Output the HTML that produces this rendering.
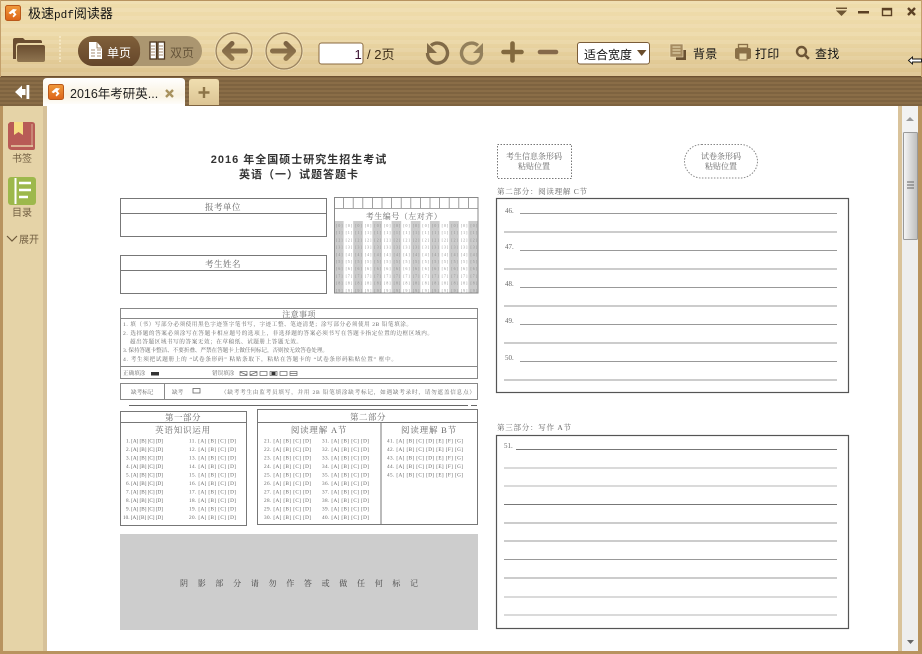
<!DOCTYPE html>
<html lang="zh"><head><meta charset="utf-8"><title>极速pdf阅读器</title>
<style>
html,body{margin:0;padding:0;background:#fff;width:922px;height:654px;overflow:hidden}
svg{display:block;font-family:"Liberation Sans","Noto Sans CJK SC",sans-serif}
.s{font-family:"Liberation Serif","Noto Serif CJK SC",serif;fill:#666}
.doc{filter:blur(.35px)}
</style></head><body>
<svg width="922" height="654" viewBox="0 0 922 654" xmlns="http://www.w3.org/2000/svg">
<defs>
<linearGradient id="tb" x1="0" y1="0" x2="0" y2="1"><stop offset="0" stop-color="#efdcab"/><stop offset=".45" stop-color="#ecd8a6"/><stop offset="1" stop-color="#dcc28c"/></linearGradient>
<pattern id="st" width="4" height="8" patternUnits="userSpaceOnUse"><rect width="4" height="4" fill="#fff" opacity=".09"/></pattern>
<pattern id="st2" width="4" height="4" patternUnits="userSpaceOnUse"><rect width="4" height="4" fill="#8a6d47"/><rect width="4" height="2" fill="#7e6340"/></pattern>
<linearGradient id="fd" x1="0" y1="0" x2="0" y2="1"><stop offset="0" stop-color="#6a4d30"/><stop offset="1" stop-color="#8f7550"/></linearGradient>
<linearGradient id="ac" x1="0" y1="0" x2="0" y2="1"><stop offset="0" stop-color="#80603a"/><stop offset="1" stop-color="#65462a"/></linearGradient>
<linearGradient id="ic" x1="0" y1="0" x2="0" y2="1"><stop offset="0" stop-color="#7c6344"/><stop offset="1" stop-color="#93794f"/></linearGradient>
<linearGradient id="tab" x1="0" y1="0" x2="0" y2="1"><stop offset="0" stop-color="#fff"/><stop offset=".6" stop-color="#f9f2e1"/><stop offset="1" stop-color="#fff"/></linearGradient>
<linearGradient id="pt" x1="0" y1="0" x2="0" y2="1"><stop offset="0" stop-color="#f0deb0"/><stop offset="1" stop-color="#dcc594"/></linearGradient>
<linearGradient id="or" x1="0" y1="0" x2="0" y2="1"><stop offset="0" stop-color="#f09a3c"/><stop offset="1" stop-color="#dd6418"/></linearGradient>
<linearGradient id="th" x1="0" y1="0" x2="1" y2="0"><stop offset="0" stop-color="#f6f6f6"/><stop offset=".5" stop-color="#d9d9d9"/><stop offset="1" stop-color="#bdbdbd"/></linearGradient>
<g id="logo"><rect x=".5" y=".5" width="15" height="15" rx="2" fill="url(#or)" stroke="#b9581a"/><path d="M3.5 8 L8 4 L12 4.5 L9.5 7 L11.5 9.5 L8.5 12.5 L7.5 11 L9 9.5 L7.5 7.8 L5.5 9.2Z" fill="#fff"/></g>
</defs>

<!-- base -->
<rect width="922" height="654" fill="#b8935f"/>
<rect x="0" y="1" width="922" height="76" fill="url(#tb)"/>
<rect x="0" y="1" width="922" height="76" fill="url(#st)"/>
<rect x="0" y="0" width="922" height="1" fill="#b8935f"/>
<rect x="0" y="76" width="922" height="1.5" fill="#6d5030"/>
<rect x="0" y="77" width="922" height="29" fill="url(#st2)"/>
<rect x="0" y="0" width="1" height="77" fill="#c4a06c"/>
<rect x="921" y="0" width="1" height="77" fill="#c4a06c"/>
<rect x="3" y="106" width="40" height="545" fill="#e5d3a7"/>
<rect x="43" y="106" width="4" height="545" fill="#d6c199"/>
<rect x="47" y="106" width="851" height="545" fill="#fff"/>
<rect x="898" y="106" width="4" height="545" fill="#d9c39b"/>
<rect x="902" y="106" width="16" height="545" fill="#eeeeee"/>

<!-- title bar -->
<use href="#logo" x="5" y="5"/>
<text x="28" y="18" font-size="13" fill="#111">极速<tspan font-family="Liberation Mono" font-size="11">pdf</tspan>阅读器</text>
<path d="M836 7.5h11v1.5h-11zM836 10.500h11L841.500 16Z" fill="#6f5634"/>
<rect x="858" y="11" width="11" height="2.500" fill="#5b4024"/>
<rect x="882.500" y="8.500" width="9" height="7" fill="none" stroke="#5b4024" stroke-width="1.400"/><rect x="882" y="8" width="10" height="2.400" fill="#5b4024"/>
<path d="M908 8l7 7M915 8l-7 7" stroke="#5b4024" stroke-width="2.400"/>

<!-- toolbar left -->
<path d="M13 59V40q0-2 2-2h8l2 2h15q2 0 2 2v1H19q-3 0-3 3v13z" fill="#6a4d30"/>
<path d="M17 47q0-2 2-2h24q2 0 2 2v13q0 2-2 2H19q-2 0-2-2z" fill="url(#fd)"/>
<path d="M60 36v26" stroke="#fff6dc" stroke-width="1" stroke-dasharray="2 1.500"/>
<rect x="78" y="36" width="124" height="30" rx="15" fill="#ab9670"/>
<path d="M93 36h39a15 15 0 0 1 8 15a15 15 0 0 1-8 15H93a15 15 0 0 1 0-30z" fill="url(#ac)"/>
<path d="M89 42h8l5 6v11H89z" fill="#fff"/><path d="M97 42v6h5" fill="none" stroke="#8a6a42" stroke-width=".8"/><path d="M91 50h4M97 50h4M91 53h4M97 53h4M91 56h4M97 56h4" stroke="#8a6a42" stroke-width=".8"/>
<text x="107" y="57" font-size="12" fill="#fff">单页</text>
<rect x="150" y="42" width="6.500" height="17" fill="#fff" stroke="#4f3820" stroke-width="1.300"/><rect x="158" y="42" width="6.500" height="17" fill="#fff" stroke="#4f3820" stroke-width="1.300"/>
<path d="M151 46h4M151 49h4M151 52h4M151 55h4M159 46h4M159 49h4M159 52h4M159 55h4" stroke="#8a6a42" stroke-width=".8"/>
<text x="170" y="57" font-size="12" fill="#66553a">双页</text>

<circle cx="234" cy="51" r="18" fill="none" stroke="#9d8560" stroke-width="1.500"/><circle cx="234" cy="51" r="19" fill="none" stroke="#f6e9c6" stroke-width=".6"/>
<path d="M245.500 51H225M232 43.500L224.500 51L232 58.500" fill="none" stroke="url(#ic)" stroke-width="5" stroke-linecap="round" stroke-linejoin="round"/>
<circle cx="284" cy="51" r="18" fill="none" stroke="#9d8560" stroke-width="1.500"/><circle cx="284" cy="51" r="19" fill="none" stroke="#f6e9c6" stroke-width=".6"/>
<path d="M272.500 51H293M286 43.500L293.500 51L286 58.500" fill="none" stroke="url(#ic)" stroke-width="5" stroke-linecap="round" stroke-linejoin="round"/>

<rect x="319" y="43" width="44" height="21" rx="2.500" fill="#fff" stroke="#8a6a40"/>
<text x="354.500" y="59" font-size="13" fill="#3a1030">1</text>
<text x="367" y="59" font-size="13" fill="#3b2c18">/ 2页</text>

<path d="M431 45.500a10 10 0 1 1-3.500 7.500" fill="none" stroke="#806a48" stroke-width="3.400"/><path d="M427 43v10h10z" fill="#806a48"/>
<path d="M478 45.500a10 10 0 1 0 3.500 7.500" fill="none" stroke="#93805c" stroke-width="3.400"/><path d="M483 43v10h-10z" fill="#93805c"/>
<path d="M512.500 43.500v17M503.500 52h18" stroke="#82693f" stroke-width="4.600" stroke-linecap="round"/>
<path d="M540 52h16" stroke="#85694a" stroke-width="4.600" stroke-linecap="round"/>

<rect x="577.500" y="42.500" width="72" height="21.500" rx="2.500" fill="#fff" stroke="#7a5c38"/>
<text x="584" y="59" font-size="12" fill="#111">适合宽度</text>
<path d="M637 50h9.500l-4.800 6z" fill="#6a4d2c"/>

<rect x="676" y="50" width="10" height="10" fill="#6a5232"/>
<rect x="670" y="44" width="13" height="13" fill="#a58b60" stroke="#f1e2ba" stroke-width=".6"/>
<path d="M672.500 47h8M672.500 50h8M672.500 53h8" stroke="#efe0b8" stroke-width="1"/>
<text x="693" y="58" font-size="12" fill="#111" letter-spacing=".3">背景</text>
<path d="M735 50q0-2 2-2h12q2 0 2 2v7q0 2-2 2h-1.500V53h-9v6H737q-2 0-2-2z" fill="#8a7048"/>
<rect x="738.500" y="44.500" width="9" height="3.500" fill="none" stroke="#8a7048" stroke-width="1.300"/>
<rect x="739" y="53" width="8" height="7" fill="#e8d6a8" stroke="#8a7048" stroke-width="1"/>
<text x="755" y="58" font-size="12" fill="#111" letter-spacing=".3">打印</text>
<circle cx="801.500" cy="51.500" r="4.500" fill="none" stroke="#6d5536" stroke-width="2.400"/><path d="M805 55l3.800 3.800" stroke="#6d5536" stroke-width="2.600"/>
<text x="815" y="58" font-size="12" fill="#111" letter-spacing=".3">查找</text>

<path d="M908.500 60.500l4-3.500v2h9v3h-9v2z" fill="#fff" stroke="#111" stroke-width=".9"/>

<!-- tab bar -->
<path d="M15 92l7-6.500V89h3.500v6H22v3.500z" fill="#fff"/><rect x="26.500" y="85" width="2.800" height="14" fill="#fff"/>
<path d="M43 106V82q0-4 4-4h134q4 0 4 4v24z" fill="url(#tab)"/>
<use href="#logo" x="48" y="84"/>
<text x="70" y="98" font-size="12.500" fill="#222">2016年考研英...</text>
<path d="M166 90l7 7M173 90l-7 7" stroke="#a8925f" stroke-width="2.400"/>
<path d="M189 105V82q0-3 3-3h24q3 0 3 3v23z" fill="url(#pt)"/>
<path d="M204 87v11M198.500 92.500h11" stroke="#8d7548" stroke-width="2.400"/>
<rect x="47" y="104" width="138" height="2" fill="#fff"/>

<!-- side -->
<path d="M10 122h22q3 0 3 3v23q0 2-2 2H12q-4 0-4-4v-22z" fill="#b85b56"/>
<path d="M11 146h22" stroke="#e7d2a8" stroke-width="1.400"/>
<path d="M14 122h9v13l-4.500-3-4.500 3z" fill="#f6dc82"/>
<path d="M32 124v23" stroke="#e3c9a8" stroke-width=".8"/>
<text x="12" y="162" font-size="10" fill="#725f42">书签</text>
<rect x="8" y="177" width="28" height="28" rx="3" fill="#9db84c"/>
<path d="M15.500 178v26" stroke="#fff" stroke-width="2"/>
<path d="M19 183h12M19 190h12M19 197h9" stroke="#fff" stroke-width="2.500"/>
<text x="12" y="216" font-size="10" fill="#725f42">目录</text>
<path d="M7 236l5 5 5-5" fill="none" stroke="#6d583a" stroke-width="1.200"/>
<text x="19" y="243" font-size="10" fill="#725f42">展开</text>

<!-- scrollbar -->
<rect x="902" y="106" width="16" height="26" fill="#f2f2f2"/>
<path d="M906 121h8l-4-4z" fill="#999"/>
<rect x="903.500" y="132.500" width="14" height="107" rx="1" fill="url(#th)" stroke="#9a9a9a"/>
<path d="M907 182h7M907 185h7M907 188h7" stroke="#666" stroke-width="1"/>
<path d="M907 640h7l-3.500 4z" fill="#666"/>
<rect x="918" y="106" width="4" height="548" fill="#b8935f"/>

<!-- document -->
<g class="doc">
<text x="299" y="163" text-anchor="middle" font-size="11" font-weight="700" fill="#333" letter-spacing="1">2016 年全国硕士研究生招生考试</text>
<text x="299" y="178" text-anchor="middle" font-size="11" font-weight="700" fill="#333" letter-spacing="1">英语（一）试题答题卡</text>

<g fill="none" stroke="#777" stroke-width="1">
<rect x="120.500" y="198.500" width="206" height="38"/><path d="M120 213.500h206"/>
<rect x="120.500" y="255.500" width="206" height="38"/><path d="M120 270.500h206"/>
</g>
<text class="s" x="223" y="210" text-anchor="middle" font-size="8.500" letter-spacing=".5">报考单位</text>
<text class="s" x="223" y="267" text-anchor="middle" font-size="8.500" letter-spacing=".5">考生姓名</text>

<!-- grid -->
<rect x="334" y="221" width="9.600" height="72" fill="#ccc"/><rect x="353.200" y="221" width="9.600" height="72" fill="#ccc"/><rect x="372.400" y="221" width="9.600" height="72" fill="#ccc"/><rect x="391.600" y="221" width="9.600" height="72" fill="#ccc"/><rect x="410.800" y="221" width="9.600" height="72" fill="#ccc"/><rect x="430" y="221" width="9.600" height="72" fill="#ccc"/><rect x="449.200" y="221" width="9.600" height="72" fill="#ccc"/><rect x="468.400" y="221" width="9.600" height="72" fill="#ccc"/>
<rect x="334.500" y="197.500" width="143.500" height="95.500" fill="none" stroke="#888"/>
<path d="M334 208.500h144M343.600 197v11M353.200 197v11M362.800 197v11M372.400 197v11M382 197v11M391.600 197v11M401.200 197v11M410.800 197v11M420.400 197v11M430 197v11M439.600 197v11M449.200 197v11M458.800 197v11M468.400 197v11" stroke="#888" fill="none" stroke-width=".8"/>
<text class="s" x="404" y="219" text-anchor="middle" font-size="8" letter-spacing=".5">考生编号（左对齐）</text>
<g font-family="Liberation Serif" font-size="3.800" fill="#8a8a8a">
<text x="336" y="227" textLength="141">[0] [0] [0] [0] [0] [0] [0] [0] [0] [0] [0] [0] [0] [0] [0]</text>
<text x="336" y="234.200" textLength="141">[1] [1] [1] [1] [1] [1] [1] [1] [1] [1] [1] [1] [1] [1] [1]</text>
<text x="336" y="241.400" textLength="141">[2] [2] [2] [2] [2] [2] [2] [2] [2] [2] [2] [2] [2] [2] [2]</text>
<text x="336" y="248.600" textLength="141">[3] [3] [3] [3] [3] [3] [3] [3] [3] [3] [3] [3] [3] [3] [3]</text>
<text x="336" y="255.800" textLength="141">[4] [4] [4] [4] [4] [4] [4] [4] [4] [4] [4] [4] [4] [4] [4]</text>
<text x="336" y="263" textLength="141">[5] [5] [5] [5] [5] [5] [5] [5] [5] [5] [5] [5] [5] [5] [5]</text>
<text x="336" y="270.200" textLength="141">[6] [6] [6] [6] [6] [6] [6] [6] [6] [6] [6] [6] [6] [6] [6]</text>
<text x="336" y="277.400" textLength="141">[7] [7] [7] [7] [7] [7] [7] [7] [7] [7] [7] [7] [7] [7] [7]</text>
<text x="336" y="284.600" textLength="141">[8] [8] [8] [8] [8] [8] [8] [8] [8] [8] [8] [8] [8] [8] [8]</text>
<text x="336" y="291.800" textLength="141">[9] [9] [9] [9] [9] [9] [9] [9] [9] [9] [9] [9] [9] [9] [9]</text>
</g>

<!-- notes -->
<g fill="none" stroke="#888">
<rect x="120.500" y="308.500" width="357" height="70"/><path d="M120 318.500h358M120 366.500h358"/>
<rect x="120.500" y="383.500" width="357" height="16"/><path d="M164.500 383v16"/>
</g>
<path d="M129 405.500h339M471 405.500h6" stroke="#666" stroke-width="1"/>
<text class="s" x="299" y="317" text-anchor="middle" font-size="8" letter-spacing=".4">注意事项</text>
<g class="s" font-size="5.600">
<text x="123" y="326" textLength="289">1. 填（书）写部分必须使用黑色字迹签字笔书写，字迹工整、笔迹清楚；涂写部分必须使用 2B 铅笔填涂。</text>
<text x="123" y="335" textLength="310">2. 选择题的答案必须涂写在答题卡相应题号的选项上，非选择题的答案必须书写在答题卡指定位置的边框区域内。</text>
<text x="130" y="343.500" textLength="172">超出答题区域书写的答案无效；在草稿纸、试题册上答题无效。</text>
<text x="123" y="352" textLength="205">3. 保持答题卡整洁、不要折叠、严禁在答题卡上做任何标记，否则按无效答卷处理。</text>
<text x="123" y="361" textLength="274">4. 考生须把试题册上的 “试卷条形码” 粘贴条取下，粘贴在答题卡的 “试卷条形码粘贴位置” 框中。</text>
<text x="123" y="375">正确填涂</text><text x="212" y="375">错误填涂</text>
<text x="131" y="394">缺考标记</text><text x="172" y="394">缺考</text>
<text x="221" y="394" textLength="254">（缺考考生由监考员填写，并用 2B 铅笔填涂缺考标记，如遇缺考录时，请勿遮盖信息点）</text>
</g>
<rect x="151" y="372" width="8" height="3.500" fill="#333"/>
<g fill="none" stroke="#666" stroke-width=".7"><rect x="240" y="371.500" width="7" height="4"/><rect x="250" y="371.500" width="7" height="4"/><rect x="260" y="371.500" width="7" height="4"/><rect x="270" y="371.500" width="7" height="4"/><rect x="280" y="371.500" width="7" height="4"/><rect x="290" y="371.500" width="7" height="4"/><path d="M290 373.500h7M240 372l7 3M250 375l7-3"/></g>
<rect x="271.500" y="372" width="4" height="3" fill="#333"/>
<rect x="193" y="388.500" width="7" height="4.500" fill="none" stroke="#666" stroke-width=".8"/>

<!-- part one / two -->
<g fill="none" stroke="#777">
<rect x="120.500" y="411.500" width="126" height="114"/><path d="M120 422.500h127"/>
<rect x="257.500" y="409.500" width="220" height="115"/><path d="M257 422.500h221M381 422v102"/>
</g>
<g class="s" text-anchor="middle" font-size="8.500">
<text x="183" y="420.500" letter-spacing=".5">第一部分</text>
<text x="183" y="433" letter-spacing=".8">英语知识运用</text>
<text x="368" y="420" letter-spacing=".5">第二部分</text>
<text x="319" y="433" letter-spacing=".8">阅读理解 A节</text>
<text x="429" y="433" letter-spacing=".8">阅读理解 B节</text>
</g>
<g class="s" font-size="5.200">
<text x="126" y="442.500" textLength="37">1. [A] [B] [C] [D]</text><text x="189" y="442.500" textLength="47">11. [A] [B] [C] [D]</text><text x="264" y="442.500" textLength="47">21. [A] [B] [C] [D]</text><text x="322" y="442.500" textLength="47">31. [A] [B] [C] [D]</text><text x="387" y="442.500" textLength="76">41. [A] [B] [C] [D] [E] [F] [G]</text>
<text x="126" y="451" textLength="37">2. [A] [B] [C] [D]</text><text x="189" y="451" textLength="47">12. [A] [B] [C] [D]</text><text x="264" y="451" textLength="47">22. [A] [B] [C] [D]</text><text x="322" y="451" textLength="47">32. [A] [B] [C] [D]</text><text x="387" y="451" textLength="76">42. [A] [B] [C] [D] [E] [F] [G]</text>
<text x="126" y="459.500" textLength="37">3. [A] [B] [C] [D]</text><text x="189" y="459.500" textLength="47">13. [A] [B] [C] [D]</text><text x="264" y="459.500" textLength="47">23. [A] [B] [C] [D]</text><text x="322" y="459.500" textLength="47">33. [A] [B] [C] [D]</text><text x="387" y="459.500" textLength="76">43. [A] [B] [C] [D] [E] [F] [G]</text>
<text x="126" y="468" textLength="37">4. [A] [B] [C] [D]</text><text x="189" y="468" textLength="47">14. [A] [B] [C] [D]</text><text x="264" y="468" textLength="47">24. [A] [B] [C] [D]</text><text x="322" y="468" textLength="47">34. [A] [B] [C] [D]</text><text x="387" y="468" textLength="76">44. [A] [B] [C] [D] [E] [F] [G]</text>
<text x="126" y="476.500" textLength="37">5. [A] [B] [C] [D]</text><text x="189" y="476.500" textLength="47">15. [A] [B] [C] [D]</text><text x="264" y="476.500" textLength="47">25. [A] [B] [C] [D]</text><text x="322" y="476.500" textLength="47">35. [A] [B] [C] [D]</text><text x="387" y="476.500" textLength="76">45. [A] [B] [C] [D] [E] [F] [G]</text>
<text x="126" y="485" textLength="37">6. [A] [B] [C] [D]</text><text x="189" y="485" textLength="47">16. [A] [B] [C] [D]</text><text x="264" y="485" textLength="47">26. [A] [B] [C] [D]</text><text x="322" y="485" textLength="47">36. [A] [B] [C] [D]</text>
<text x="126" y="493.500" textLength="37">7. [A] [B] [C] [D]</text><text x="189" y="493.500" textLength="47">17. [A] [B] [C] [D]</text><text x="264" y="493.500" textLength="47">27. [A] [B] [C] [D]</text><text x="322" y="493.500" textLength="47">37. [A] [B] [C] [D]</text>
<text x="126" y="502" textLength="37">8. [A] [B] [C] [D]</text><text x="189" y="502" textLength="47">18. [A] [B] [C] [D]</text><text x="264" y="502" textLength="47">28. [A] [B] [C] [D]</text><text x="322" y="502" textLength="47">38. [A] [B] [C] [D]</text>
<text x="126" y="510.500" textLength="37">9. [A] [B] [C] [D]</text><text x="189" y="510.500" textLength="47">19. [A] [B] [C] [D]</text><text x="264" y="510.500" textLength="47">29. [A] [B] [C] [D]</text><text x="322" y="510.500" textLength="47">39. [A] [B] [C] [D]</text>
<text x="123" y="519" textLength="40">10. [A] [B] [C] [D]</text><text x="189" y="519" textLength="47">20. [A] [B] [C] [D]</text><text x="264" y="519" textLength="47">30. [A] [B] [C] [D]</text><text x="322" y="519" textLength="47">40. [A] [B] [C] [D]</text>
</g>
<rect x="120" y="534" width="358" height="96" fill="#cdcdcd"/>
<text class="s" x="180" y="586" font-size="8" letter-spacing="9.700" style="fill:#444">阴影部分请勿作答或做任何标记</text>

<!-- right column -->
<rect x="497.500" y="144.500" width="74" height="34" fill="none" stroke="#777" stroke-dasharray="1.500 1.500"/>
<rect x="684.500" y="144.500" width="73" height="33.500" rx="17" fill="none" stroke="#888" stroke-dasharray="1.500 1.500"/>
<g class="s" text-anchor="middle" font-size="8">
<text x="534" y="159">考生信息条形码</text><text x="534" y="169">粘贴位置</text>
<text x="721" y="159">试卷条形码</text><text x="721" y="169">粘贴位置</text>
</g>
<text class="s" x="497" y="194" font-size="7.500" textLength="90">第二部分：阅读理解 C节</text>
<text class="s" x="497" y="430" font-size="7.500" textLength="74">第三部分：写作 A节</text>
<rect x="496.500" y="198.500" width="352" height="194" fill="none" stroke="#555" stroke-width="1.200"/>
<rect x="496.500" y="435.500" width="352" height="193" fill="none" stroke="#555" stroke-width="1.200"/>
<g stroke="#999" stroke-width="1">
<path d="M520 213.500h317M504 232h333M520 250.500h317M504 269h333M520 287.500h317M504 306h333M520 324.500h317M504 343h333M520 361.500h317M504 380h333"/>
<path d="M516 449.500h321" stroke="#777"/>
<path d="M504 468h333M504 486h333" stroke="#c4c4c4" stroke-width="1.300"/>
<path d="M504 504.500h333" stroke="#777"/>
<path d="M504 523h333M504 541h333M504 559.500h333M504 578h333"/>
<path d="M504 597h333M504 615h333" stroke="#c4c4c4" stroke-width="1.300"/>
</g>
<g class="s" font-size="7">
<text x="505" y="213">46.</text><text x="505" y="249">47.</text><text x="505" y="286">48.</text><text x="505" y="323">49.</text><text x="505" y="360">50.</text><text x="504" y="448">51.</text>
</g>
</g>
<rect x="0" y="651" width="918" height="3" fill="#b8935f"/>
<rect x="0" y="106" width="3" height="548" fill="#b8935f"/>
</svg>
</body></html>
